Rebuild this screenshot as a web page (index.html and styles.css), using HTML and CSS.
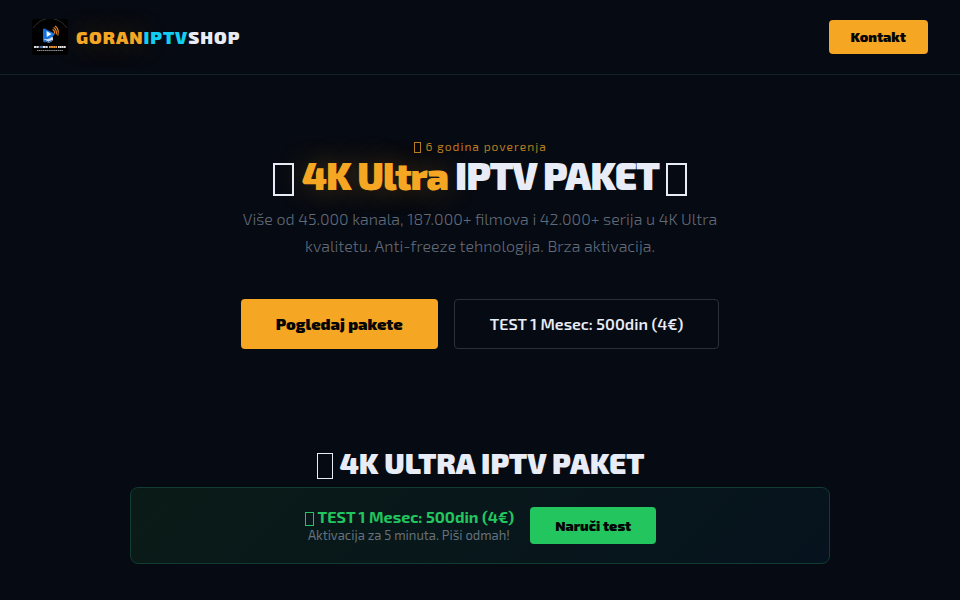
FILE: index.html
```html
<!DOCTYPE html>
<html lang="sr-Latn">
<head>
<meta charset="utf-8">
<meta name="viewport" content="width=device-width, initial-scale=1">
<title>GORANIPTVSHOP</title>
<link rel="stylesheet" href="styles.css">
</head>
<body>
<header class="header">
  <a class="brand" href="#">
    <svg class="brand-logo" viewBox="0 0 36 36" aria-hidden="true">
      <rect width="36" height="36" rx="2" fill="#000"/>
      <path d="M1 9Q7 1 14 0M22 0Q29 1 35 9" fill="none" stroke="#3c4148" stroke-width=".7"/>
      <path d="M11 11Q11 9 13 9.700L22 14.300Q23.500 15.200 22 16.300L13.500 23Q11 24 11 21Z" fill="#1672dd"/>
      <path d="M14.500 12L19.500 15L14.800 18Z" fill="#f4f8ff"/>
      <path d="M12 19.500Q16 21.500 20.500 17.500Q22.500 22 17.500 23.600Q13.500 24 12 19.500Z" fill="#cbdcf2"/>
      <path d="M13 21.500Q16 24.500 20 21.500" fill="none" stroke="#174c98"/>
      <path d="M20.500 10.500Q23 11.500 22.500 14.500M21.500 8.500Q25 10.500 24.300 15.300M23 7Q27.500 10 25.800 16.500" fill="none" stroke="#ed8b27" stroke-width="1.100"/>
      <path d="M2 28H7M11 28H16" stroke="#d8dce2" stroke-width="2.200" stroke-dasharray="2 .3"/>
      <path d="M7.500 28H11" stroke="#566d93" stroke-width="2.200"/>
      <path d="M17 28H25" stroke="#e9953e" stroke-width="2.200" stroke-dasharray="1.800 .3"/>
      <path d="M26 28H34" stroke="#e1e3e6" stroke-width="2.200" stroke-dasharray="1.700 .3"/>
      <path d="M5 31.500H31" stroke="#8b8e94" stroke-dasharray="1.500 .4"/>
    </svg>
    <span class="brand-name"><span class="gold glow">GORAN</span><span class="cyan">IPTV</span>SHOP</span>
  </a>
  <a class="button button-small" href="#kontakt">Kontakt</a>
</header>
<main>
  <section class="hero">
    <p class="badge"><i class="glyph"></i> 6 godina poverenja</p>
    <h1 class="title"><i class="glyph"></i> <span class="gold glow">4K Ultra</span> IPTV PAKET <i class="glyph"></i></h1>
    <p class="lead">Više od 45.000 kanala, 187.000+ filmova i 42.000+ serija u 4K Ultra kvalitetu. Anti-freeze tehnologija. Brza aktivacija.</p>
    <div class="actions">
      <a class="button button-large" href="#paketi">Pogledaj pakete</a>
      <a class="button button-large button-outline" href="#test">TEST 1 Mesec: 500din (4€)</a>
    </div>
  </section>
  <section class="packages" id="paketi">
    <h2 class="subtitle"><i class="glyph"></i> 4K ULTRA IPTV PAKET</h2>
    <div class="trial" id="test">
      <div class="trial-text">
        <p class="trial-name"><i class="glyph"></i> TEST 1 Mesec: 500din (4€)</p>
        <p class="trial-note">Aktivacija za 5 minuta. Piši odmah!</p>
      </div>
      <a class="button button-green" href="#kontakt">Naruči test</a>
    </div>
  </section>
</main>
</body>
</html>
```
FILE: styles.css
```css
* {
  box-sizing: border-box;
}

body {
  margin: 0;
  background: #060a12;
  color: #e8ecf6;
  font-family: "Exo 2", "Open Sans", "Noto Sans", sans-serif;
}

h1, h2, p {
  margin: 0;
}

a {
  color: inherit;
  text-decoration: none;
}

.header {
  display: flex;
  align-items: center;
  justify-content: space-between;
  padding: 19px 32px;
  border-bottom: 1px solid #13202a;
}

.brand {
  display: flex;
  align-items: center;
  gap: 8px;
}

.brand-logo {
  width: 36px;
  height: 36px;
}

.brand-name {
  font-size: 18px;
  line-height: 24px;
  font-weight: 900;
  letter-spacing: 1px;
}

.gold {
  color: #f5a623;
}

.glow {
  text-shadow: 0 0 30px rgba(245, 166, 35, 0.3);
}

.cyan {
  color: #12cdf4;
}

.button {
  display: flex;
  align-items: center;
  justify-content: center;
  border-radius: 4px;
  background: #f5a623;
  color: #050505;
  font-weight: 900;
}

.button-small {
  padding: 7px 22px;
  font-size: 14px;
  line-height: 20px;
}

.button-large {
  padding: 13px 35px;
  font-size: 16px;
  line-height: 24px;
}

.button-outline {
  padding: 12px 35px;
  border: 1px solid #2b3038;
  background: transparent;
  color: #e8ecf6;
  font-weight: 600;
}

.glyph {
  display: inline-block;
  width: 0.55em;
  height: 0.88em;
  margin: 0 1px;
  border: 1px solid;
  vertical-align: -0.16em;
}

.hero {
  display: flex;
  flex-direction: column;
  align-items: center;
  padding: 64px 24px 96px;
  text-align: center;
}

.badge {
  color: #b77d20;
  font-size: 12px;
  line-height: 15px;
  letter-spacing: 1px;
}

.title {
  font-size: 38px;
  line-height: 42px;
  font-weight: 900;
  letter-spacing: -1px;
}

.title .glyph {
  border-width: 2px;
}

.lead {
  max-width: 500px;
  margin-top: 9px;
  color: #626b79;
  font-size: 16px;
  line-height: 27px;
  font-weight: 300;
}

.actions {
  display: flex;
  flex-wrap: wrap;
  justify-content: center;
  gap: 16px;
  margin-top: 40px;
}

.packages {
  padding: 0 24px 36px;
}

.subtitle {
  font-size: 29px;
  line-height: 36px;
  font-weight: 900;
  text-align: center;
}

.trial {
  display: flex;
  align-items: center;
  justify-content: center;
  gap: 16px;
  max-width: 700px;
  margin: 6px auto 0;
  padding: 19px;
  border: 1px solid #123b31;
  border-radius: 8px;
  background: linear-gradient(135deg, #0a1b17, #06131e);
  text-align: center;
}

.trial-name {
  color: #22c55e;
  font-size: 16px;
  line-height: 20px;
  font-weight: 700;
}

.trial-note {
  color: #65717b;
  font-size: 13px;
  line-height: 17px;
}

.button-green {
  padding: 8px 25px;
  background: #22c55e;
  font-size: 14px;
  line-height: 21px;
}
```
